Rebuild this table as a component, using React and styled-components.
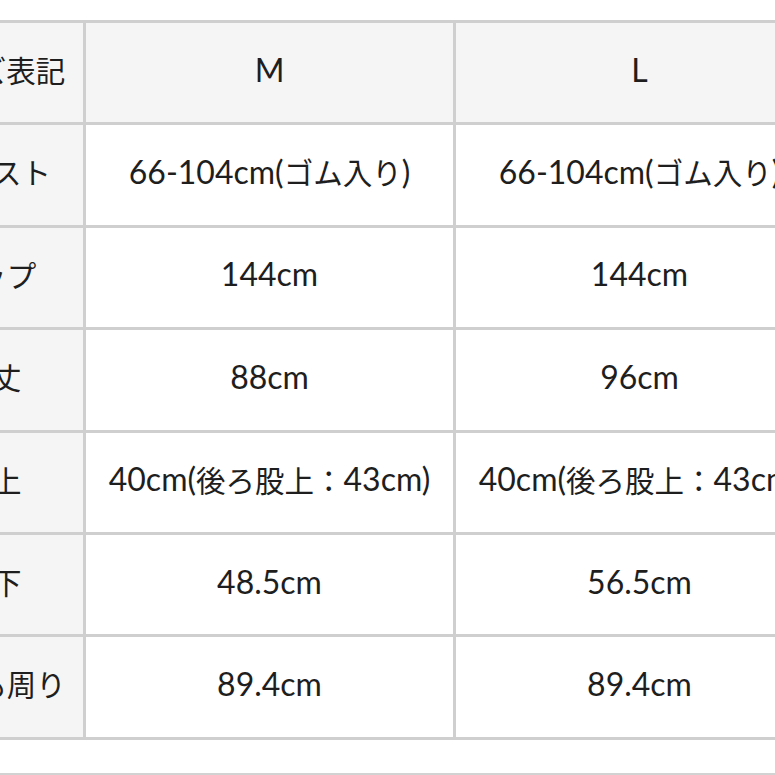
import React from "react";
import styled, { createGlobalStyle } from "styled-components";

const GlobalStyle = createGlobalStyle`
    html, body {
        margin : 0;
        padding : 0;
        background : #ffffff;
        overflow : hidden;
    }
    body {
        width : 775px;
        height : 775px;
        font-family : "Lato", "Noto Sans CJK JP", sans-serif;
        color : #1e1e1e;
    }
`

const Page = styled.div`
    width : 775px;
    height : 775px;
    overflow : hidden;
    padding-top : 20px;
    box-sizing : border-box;
`

const Table = styled.div`
    display : grid;
    grid-template-columns : 182px 367px 367px;
    grid-auto-rows : 99.4px;
    gap : 3px;
    padding : 3px;
    width : max-content;
    margin-left : -102px;
    background : #cfcfcf;
`

const Cell = styled.div`
    display : flex;
    align-items : center;
    justify-content : center;
    white-space : nowrap;
    font-size : 32px;
    line-height : 1;
    padding-bottom : 6px;
    box-sizing : border-box;
    background : ${props => props.$shaded ? "#f5f5f5" : "#ffffff"};
`

// japanese glyphs sit a bit smaller than the latin ones in the shot
const Jp = styled.span`
    font-family : "Noto Sans CJK JP", sans-serif;
    font-size : 29.5px;
`

const splitJp = (text) =>
    text.split(/([\u3000-\u9fff\uff00-\uffef]+)/).map((part, i) =>
        /[\u3000-\u9fff\uff00-\uffef]/.test(part) ? <Jp key={i}>{part}</Jp> : part
    )

const Divider = styled.div`
    margin-top : 33px;
    height : 2px;
    background : #d2d2d2;
`

const header = ["サイズ表記", "M", "L"]

const rows = [
    ["ウエスト", "66-104cm(ゴム入り)", "66-104cm(ゴム入り)"],
    ["ヒップ", "144cm", "144cm"],
    ["総丈", "88cm", "96cm"],
    ["股上", "40cm(後ろ股上：43cm)", "40cm(後ろ股上：43cm)"],
    ["股下", "48.5cm", "56.5cm"],
    ["太もも周り", "89.4cm", "89.4cm"],
]

const App = () => {
    return (
        <Page>
            <GlobalStyle />
            <Table>
                {header.map((h) => (
                    <Cell key={h} $shaded>{splitJp(h)}</Cell>
                ))}
                {rows.map((row) => (
                    <React.Fragment key={row[0]}>
                        <Cell $shaded>{splitJp(row[0])}</Cell>
                        <Cell>{splitJp(row[1])}</Cell>
                        <Cell>{splitJp(row[2])}</Cell>
                    </React.Fragment>
                ))}
            </Table>
            <Divider />
        </Page>
    )
}

export default App
